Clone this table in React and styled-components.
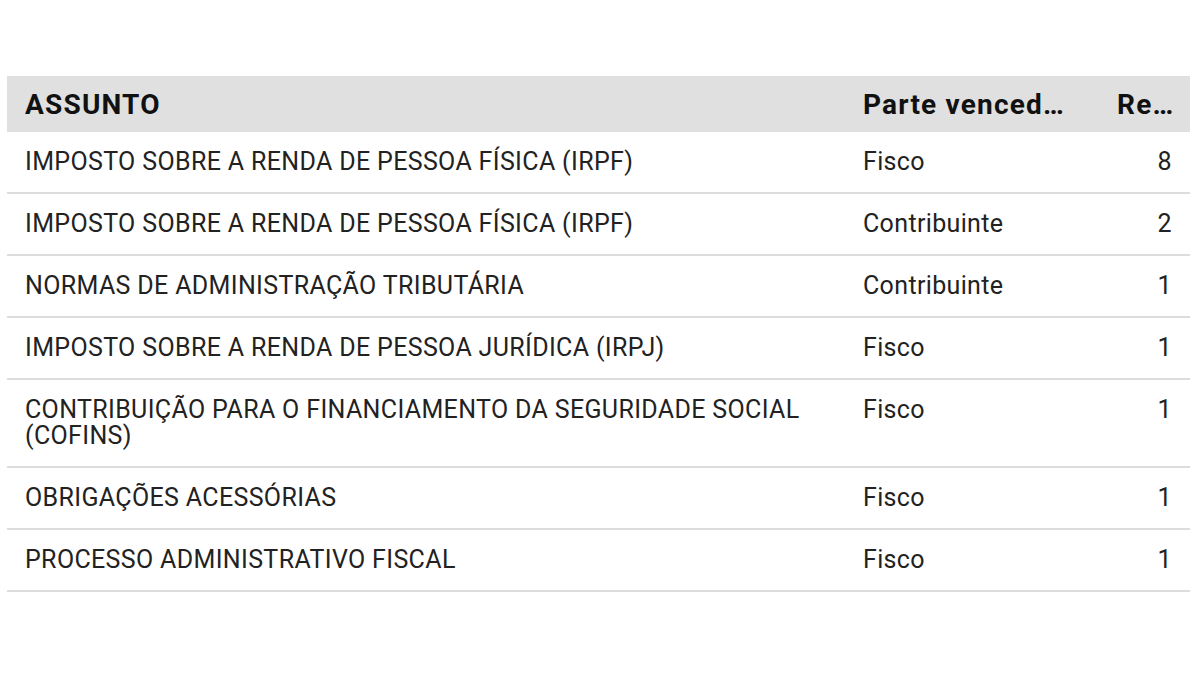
import React from "react";
import styled, { createGlobalStyle } from "styled-components";

const GlobalStyle = createGlobalStyle`
  html, body {
    margin: 0;
    padding: 0;
    background: #ffffff;
  }
  body {
    font-family: Roboto, "Noto Sans", sans-serif;
    color: #1c1c1c;
  }
`;

const Page = styled.div`
  width: 1200px;
  height: 675px;
  box-sizing: border-box;
  padding: 76px 10px 0 7px;
`;

const Table = styled.div`
  display: grid;
  grid-template-columns: 838px 254px 1fr;
`;

const HeadCell = styled.div`
  background: #e0e0e0;
  height: 56px;
  padding: 0 ${(p) => p.$pr || 18}px 0 18px;
  display: flex;
  align-items: center;
  font-size: 28px;
  font-weight: 700;
  letter-spacing: 1.2px;
  color: #111;
  min-width: 0;

  span {
    overflow: hidden;
    white-space: nowrap;
    text-overflow: ellipsis;
  }
`;

const Cell = styled.div`
  padding: 17px 18px;
  border-bottom: 2px solid #dcdcdc;
  font-size: 25px;
  line-height: 26px;
  letter-spacing: 0.35px;
  color: #222;
  text-align: ${(p) => (p.$right ? "right" : "left")};
  min-width: 0;
`;

const rows = [
  ["IMPOSTO SOBRE A RENDA DE PESSOA FÍSICA (IRPF)", "Fisco", 8],
  ["IMPOSTO SOBRE A RENDA DE PESSOA FÍSICA (IRPF)", "Contribuinte", 2],
  ["NORMAS DE ADMINISTRAÇÃO TRIBUTÁRIA", "Contribuinte", 1],
  ["IMPOSTO SOBRE A RENDA DE PESSOA JURÍDICA (IRPJ)", "Fisco", 1],
  ["CONTRIBUIÇÃO PARA O FINANCIAMENTO DA SEGURIDADE SOCIAL (COFINS)", "Fisco", 1],
  ["OBRIGAÇÕES ACESSÓRIAS", "Fisco", 1],
  ["PROCESSO ADMINISTRATIVO FISCAL", "Fisco", 1],
];

export default function App() {
  return (
    <Page>
      <GlobalStyle />
      <Table>
        <HeadCell><span>ASSUNTO</span></HeadCell>
        <HeadCell $pr={30}><span>Parte vencedora</span></HeadCell>
        <HeadCell $pr={6}><span>Recursos</span></HeadCell>
        {rows.map(([assunto, parte, qtd], i) => (
          <React.Fragment key={i}>
            <Cell>{assunto}</Cell>
            <Cell>{parte}</Cell>
            <Cell $right>{qtd}</Cell>
          </React.Fragment>
        ))}
      </Table>
    </Page>
  );
}
